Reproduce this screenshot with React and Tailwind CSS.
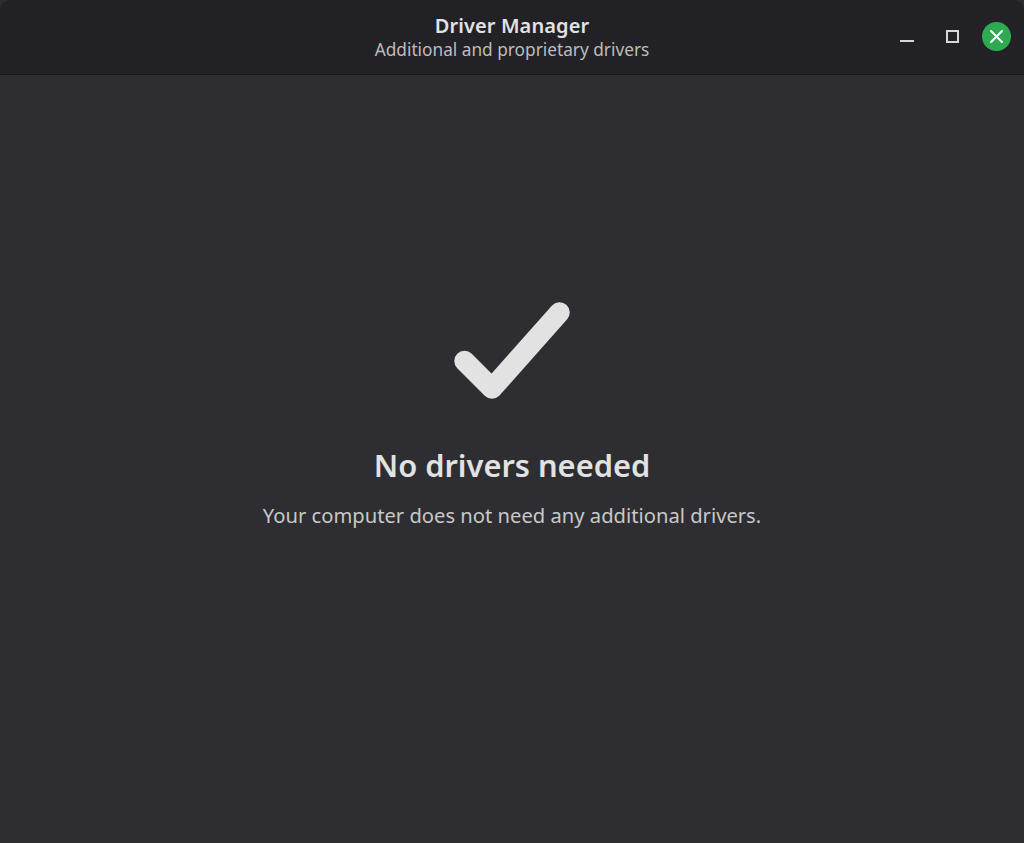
import React from 'react';

const App = () => {
    return (
        <div className="w-[1024px] h-[843px] bg-[#2e2e32] flex flex-col font-['Noto_Sans','Open_Sans',sans-serif] overflow-hidden">
            {/* Title bar */}
            <div className="h-[75px] shrink-0 bg-[#222226] border-b border-[#18181b] rounded-t-[10px] flex items-start relative">
                <div className="w-full pt-[14px] flex flex-col items-center">
                    <div className="text-[20px] leading-[24px] font-semibold text-[#e2e2e2] tracking-[0.1px]">Driver Manager</div>
                    <div className="text-[17.25px] leading-[23px] text-[#bdbdbd]">Additional and proprietary drivers</div>
                </div>

                <div className="absolute right-[13px] top-[22px] flex items-center">
                    <button className="w-[28px] h-[29px] flex items-center justify-center">
                        <svg width="14" height="15" viewBox="0 0 14 15">
                            <rect x="0" y="11" width="14" height="2" fill="#d8d8d8" />
                        </svg>
                    </button>
                    <button className="w-[28px] h-[29px] ml-[17px] flex items-center justify-center">
                        <svg width="13" height="13" viewBox="0 0 13 13" fill="none">
                            <rect x="1" y="1" width="11" height="11" stroke="#d8d8d8" strokeWidth="2" />
                        </svg>
                    </button>
                    <button className="w-[29px] h-[29px] ml-[16px] rounded-full bg-[#2fa952] flex items-center justify-center">
                        <svg width="15" height="15" viewBox="0 0 15 15" fill="none">
                            <path d="M2 2 L13 13 M13 2 L2 13" stroke="#ffffff" strokeWidth="2" strokeLinecap="round" />
                        </svg>
                    </button>
                </div>
            </div>

            {/* Content */}
            <div className="flex-1 flex flex-col items-center pt-[227px]">
                <svg width="120" height="100" viewBox="0 0 120 100" fill="none">
                    <path d="M12.5 59 L40 86.5 L107.5 10.5" stroke="#e2e2e2" strokeWidth="20.5" strokeLinecap="round" strokeLinejoin="round" />
                </svg>
                <div className="mt-[43px] text-[30.8px] leading-[40px] font-semibold text-[#e2e2e2]">No drivers needed</div>
                <div className="mt-[16px] text-[20.2px] leading-[28px] text-[#c8c8c8]">Your computer does not need any additional drivers.</div>
            </div>
        </div>
    );
};

export default App;
